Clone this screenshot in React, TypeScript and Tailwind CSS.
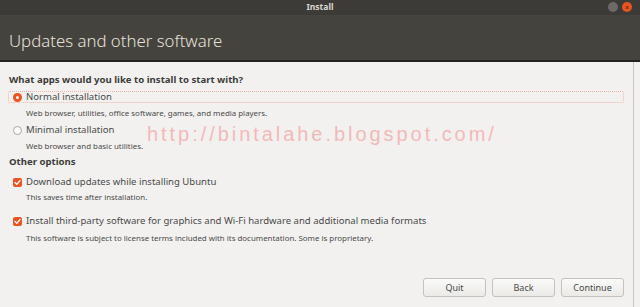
import React from "react";

function Radio({ checked }: { checked: boolean }) {
  if (checked) {
    return (
      <span className="flex h-[9px] w-[9px] items-center justify-center rounded-full bg-[#e95420]">
        <span className="h-[3px] w-[3px] rounded-full bg-white" />
      </span>
    );
  }
  return <span className="h-[9px] w-[9px] rounded-full border border-[#a8a6a2] bg-[#fbfbfa]" />;
}

function Checkbox() {
  return (
    <span className="flex h-[9px] w-[9px] items-center justify-center rounded-[2px] bg-[#e95420]">
      <svg width="7" height="7" viewBox="0 0 7 7" fill="none">
        <path d="M1 3.6 L2.8 5.3 L6 1.6" stroke="white" strokeWidth="1.4" strokeLinecap="round" strokeLinejoin="round" />
      </svg>
    </span>
  );
}

interface OptionProps {
  control: React.ReactNode;
  label: string;
  focused?: boolean;
}

function OptionRow({ control, label, focused }: OptionProps) {
  return (
    <div
      className={
        "-ml-[1px] flex h-[12px] items-center gap-[4px] pl-[4px] " +
        (focused ? "mr-[9px] rounded-[2px] border border-dotted border-[#f0b8a4]" : "border border-transparent")
      }
    >
      {control}
      <span className="text-[9.55px] leading-none text-[#4a4a48]">{label}</span>
    </div>
  );
}

function Desc({ children }: { children: React.ReactNode }) {
  return (
    <div className="flex h-[12px] items-center pl-[17px] text-[7.9px] leading-none text-[#4a4a48]">{children}</div>
  );
}

function Heading({ children }: { children: React.ReactNode }) {
  return (
    <div className="flex h-[12px] items-center text-[9.6px] font-bold leading-none text-[#3c3c3a]">{children}</div>
  );
}

function Button({ children }: { children: React.ReactNode }) {
  return (
    <button className="flex h-[19px] w-[63px] items-center justify-center rounded-[3px] border border-[#c4c2be] bg-gradient-to-b from-[#fafaf9] to-[#ebeae7] text-[9px] text-[#4a4a48]">
      {children}
    </button>
  );
}

export default function App() {
  return (
    <div
      className="relative flex h-[307px] w-[640px] flex-col overflow-hidden bg-[#f2f1f0]"
      style={{ fontFamily: '"Noto Sans", "Open Sans", sans-serif' }}
    >
      {/* title bar */}
      <div className="relative flex h-[15px] items-center justify-center bg-[#3c3b37]">
        <span className="text-[8.5px] font-bold text-[#dcd8d0]">Install</span>
        <div className="absolute right-[8px] top-[2px] flex gap-[4px]">
          <span className="h-[10px] w-[10px] rounded-full bg-[#6b6a66]" />
          <span className="flex h-[10px] w-[10px] items-center justify-center rounded-full bg-[#e95420] text-[6px] font-bold leading-none text-[#7a2a10]">
            x
          </span>
        </div>
      </div>

      {/* header */}
      <div className="flex h-[47px] items-center border-b-2 border-[#24231f] bg-[#45433d] pl-[9px] pt-[6px]">
        <span className="text-[16.8px] font-light text-[#e4e1da]">Updates and other software</span>
      </div>

      {/* content */}
      <div className="mr-[6px] flex flex-1 border-r border-[#c9c7c3]">
        <div className="flex flex-1 flex-col pl-[9px] pt-[12px]">
          <Heading>What apps would you like to install to start with?</Heading>
          <div className="mt-[5px]">
            <OptionRow control={<Radio checked />} label="Normal installation" focused />
          </div>
          <div className="mt-[5px]">
            <Desc>Web browser, utilities, office software, games, and media players.</Desc>
          </div>
          <div className="mt-[4px]">
            <OptionRow control={<Radio checked={false} />} label="Minimal installation" />
          </div>
          <div className="mt-[5px]">
            <Desc>Web browser and basic utilities.</Desc>
          </div>
          <div className="mt-[3px]">
            <Heading>Other options</Heading>
          </div>
          <div className="mt-[8px]">
            <OptionRow control={<Checkbox />} label="Download updates while installing Ubuntu" />
          </div>
          <div className="mt-[4px]">
            <Desc>This saves time after installation.</Desc>
          </div>
          <div className="mt-[11px]">
            <OptionRow
              control={<Checkbox />}
              label="Install third-party software for graphics and Wi-Fi hardware and additional media formats"
            />
          </div>
          <div className="mt-[6px]">
            <Desc>This software is subject to license terms included with its documentation. Some is proprietary.</Desc>
          </div>

          <div className="mt-auto mb-[10px] flex justify-end gap-[6px] pr-[9px]">
            <Button>Quit</Button>
            <Button>Back</Button>
            <Button>Continue</Button>
          </div>
        </div>
      </div>

      {/* watermark */}
      <div
        className="pointer-events-none absolute left-[147px] top-[119px] text-[20px] tracking-[2.95px] text-[#f2b4b4] opacity-90"
        style={{ fontFamily: '"Liberation Sans", Arial, sans-serif' }}
      >
        http://bintalahe.blogspot.com/
      </div>
    </div>
  );
}
